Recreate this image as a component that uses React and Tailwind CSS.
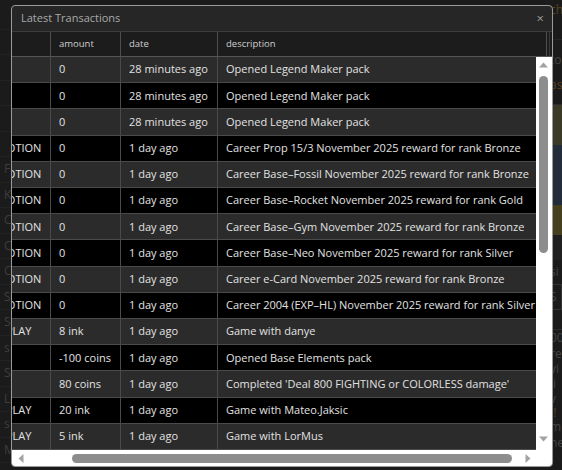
import React from "react";

const rows = [
  ["", "0", "28 minutes ago", "Opened Legend Maker pack"],
  ["", "0", "28 minutes ago", "Opened Legend Maker pack"],
  ["", "0", "28 minutes ago", "Opened Legend Maker pack"],
  ["PROMOTION", "0", "1 day ago", "Career Prop 15/3 November 2025 reward for rank Bronze"],
  ["PROMOTION", "0", "1 day ago", "Career Base\u2013Fossil November 2025 reward for rank Bronze"],
  ["PROMOTION", "0", "1 day ago", "Career Base\u2013Rocket November 2025 reward for rank Gold"],
  ["PROMOTION", "0", "1 day ago", "Career Base\u2013Gym November 2025 reward for rank Bronze"],
  ["PROMOTION", "0", "1 day ago", "Career Base\u2013Neo November 2025 reward for rank Silver"],
  ["PROMOTION", "0", "1 day ago", "Career e-Card November 2025 reward for rank Bronze"],
  ["PROMOTION", "0", "1 day ago", "Career 2004 (EXP\u2013HL) November 2025 reward for rank Silver"],
  ["GAMEPLAY", "8 ink", "1 day ago", "Game with danye"],
  ["", "-100 coins", "1 day ago", "Opened Base Elements pack"],
  ["", "80 coins", "1 day ago", "Completed 'Deal 800 FIGHTING or COLORLESS damage'"],
  ["GAMEPLAY", "20 ink", "1 day ago", "Game with Mateo.Jaksic"],
  ["GAMEPLAY", "5 ink", "1 day ago", "Game with LorMus"],
];

const leftLetters = ["", "", "", "", "", "", "F", "K", "C", "C", "C", "S", "S", "s", "S", "L", "s", "M"];

function Backdrop() {
  return (
    <div className="flex h-[470px] w-[562px] justify-between bg-[#1b1b1b]">
      <div className="flex w-[14px] flex-col pt-[4px]">
        {leftLetters.map((l, i) => (
          <div
            key={i}
            className="flex h-[25.5px] items-center border-b border-[#222] pl-[4px] text-[12px] text-[#3e3e3e]"
          >
            {l}
          </div>
        ))}
      </div>
      <div className="flex w-[14px] flex-col text-[12px] text-[#444]">
        <div className="h-[20px] pl-[2px] leading-[20px] text-[#5a4221]">ch</div>
        <div className="h-[20px] border-b border-[#262626]" />
        <div className="h-[30px] pl-[2px] leading-[40px]">to</div>
        <div className="h-[35px] border-b border-[#2c2c2c] pl-[2px] leading-[30px] text-[#5a4221]">as</div>
        <div className="flex h-[155px] flex-col bg-[#1f2530]">
          <div className="h-[40px] bg-[#3a3a26]" />
          <div className="h-[60px] bg-[#232c3a]" />
          <div className="h-[30px] bg-[#46401e]" />
          <div className="h-[25px] bg-[#202020]" />
        </div>
        <div className="h-[24px] pl-[2px] leading-[24px]">si</div>
        <div className="h-[26px] border border-[#333] pl-[1px] leading-[24px]">S</div>
        <div className="h-[20px] border-b border-[#2c2c2c]" />
        <div className="h-[16px] pl-[2px] leading-[16px]">00</div>
        <div className="h-[15px] pl-[2px] leading-[15px]">re</div>
        <div className="h-[15px] pl-[2px] leading-[15px]">vi</div>
        <div className="h-[15px] pl-[2px] leading-[15px]">li</div>
        <div className="h-[15px] pl-[2px] leading-[15px]">v</div>
        <div className="h-[13px] pl-[2px] leading-[13px] text-[#5a4221]">!!</div>
        <div className="h-[16px] pl-[2px] leading-[16px]">m</div>
        <div className="h-[16px] pl-[2px] leading-[16px]">ne</div>
      </div>
    </div>
  );
}

function TriUp() {
  return (
    <svg width="9" height="6" viewBox="0 0 9 6">
      <path d="M0 5.5 L4.5 0.5 L9 5.5 Z" fill="#a3a3a3" />
    </svg>
  );
}
function TriDown() {
  return (
    <svg width="9" height="6" viewBox="0 0 9 6">
      <path d="M0 0.5 L4.5 5.5 L9 0.5 Z" fill="#a3a3a3" />
    </svg>
  );
}
function TriLeft() {
  return (
    <svg width="6" height="9" viewBox="0 0 6 9">
      <path d="M5.5 0 L0.5 4.5 L5.5 9 Z" fill="#a3a3a3" />
    </svg>
  );
}
function TriRight() {
  return (
    <svg width="6" height="9" viewBox="0 0 6 9">
      <path d="M0.5 0 L5.5 4.5 L0.5 9 Z" fill="#a3a3a3" />
    </svg>
  );
}

export default function App() {
  return (
    <div
      className="relative h-[470px] w-[562px] overflow-hidden"
      style={{ fontFamily: '"Open Sans", "Noto Sans", sans-serif' }}
    >
      <Backdrop />
      <div className="absolute left-[11px] top-[5px] flex h-[462px] w-[542px] flex-col overflow-hidden rounded-[4px] border border-[#9a9a9a] bg-[#262626]">
        {/* title */}
        <div className="flex h-[25px] shrink-0 items-center justify-between pl-[9px] pr-[8px] text-[11px] text-[#a9a9a9]">
          <span>Latest Transactions</span>
          <span className="text-[13px] leading-none text-[#9a9a9a]">×</span>
        </div>
        {/* header */}
        <div className="flex h-[26px] shrink-0 border-y border-[#3c3c3c] border-b-[#555] bg-[#1c1c1c] text-[9.5px] text-[#cfcfcf]">
          <div className="flex w-[535px] overflow-hidden border-r border-[#4e4e4e]">
            <div className="ml-[-45px] flex">
              <div className="flex w-[84px] shrink-0 items-center border-r border-[#4e4e4e] px-[8px]">type</div>
              <div className="flex w-[70px] shrink-0 items-center border-r border-[#4e4e4e] px-[8px]">amount</div>
              <div className="flex w-[97px] shrink-0 items-center border-r border-[#4e4e4e] px-[8px]">date</div>
              <div className="flex w-[330px] shrink-0 items-center px-[8px]">description</div>
            </div>
          </div>
          <div className="ml-[2px] w-[3px] border-l border-[#3a3a3a]" />
        </div>
        {/* body */}
        <div className="flex h-[393px] shrink-0">
          <div className="flex w-[524px] flex-col overflow-hidden text-[11px] text-[#e2e2e2]">
            {rows.map((r, i) => (
              <div
                key={i}
                className={
                  i % 2 === 0
                    ? "flex min-h-0 flex-1 border-b border-[#4a4a4a] bg-[#2b2b2b]"
                    : "flex min-h-0 flex-1 border-b border-[#4a4a4a] bg-black"
                }
              >
                <div className="ml-[-45px] flex">
                  <div className="flex w-[84px] shrink-0 items-center whitespace-nowrap border-r border-[#4a4a4a] px-[8px]">{r[0]}</div>
                  <div className="flex w-[70px] shrink-0 items-center whitespace-nowrap border-r border-[#4a4a4a] px-[8px]">{r[1]}</div>
                  <div className="flex w-[97px] shrink-0 items-center whitespace-nowrap border-r border-[#4a4a4a] px-[8px]">{r[2]}</div>
                  <div className="flex w-[330px] shrink-0 items-center whitespace-nowrap px-[8px]">{r[3]}</div>
                </div>
              </div>
            ))}
          </div>
          <div className="flex w-[16px] shrink-0 flex-col items-center bg-white pt-[5px] pr-[1px]">
            <TriUp />
            <div className="mt-[8px] h-[177px] w-[9px] rounded-full bg-[#8d8d8d]" />
            <div className="flex-1" />
            <div className="mb-[8px]">
              <TriDown />
            </div>
          </div>
        </div>
        {/* horizontal scrollbar */}
        <div className="flex h-[16px] shrink-0 items-center bg-white pl-[6px]">
          <TriLeft />
          <div className="ml-[48px] h-[9px] w-[440px] rounded-full bg-[#8d8d8d]" />
          <div className="ml-[13px]">
            <TriRight />
          </div>
        </div>
      </div>
    </div>
  );
}
